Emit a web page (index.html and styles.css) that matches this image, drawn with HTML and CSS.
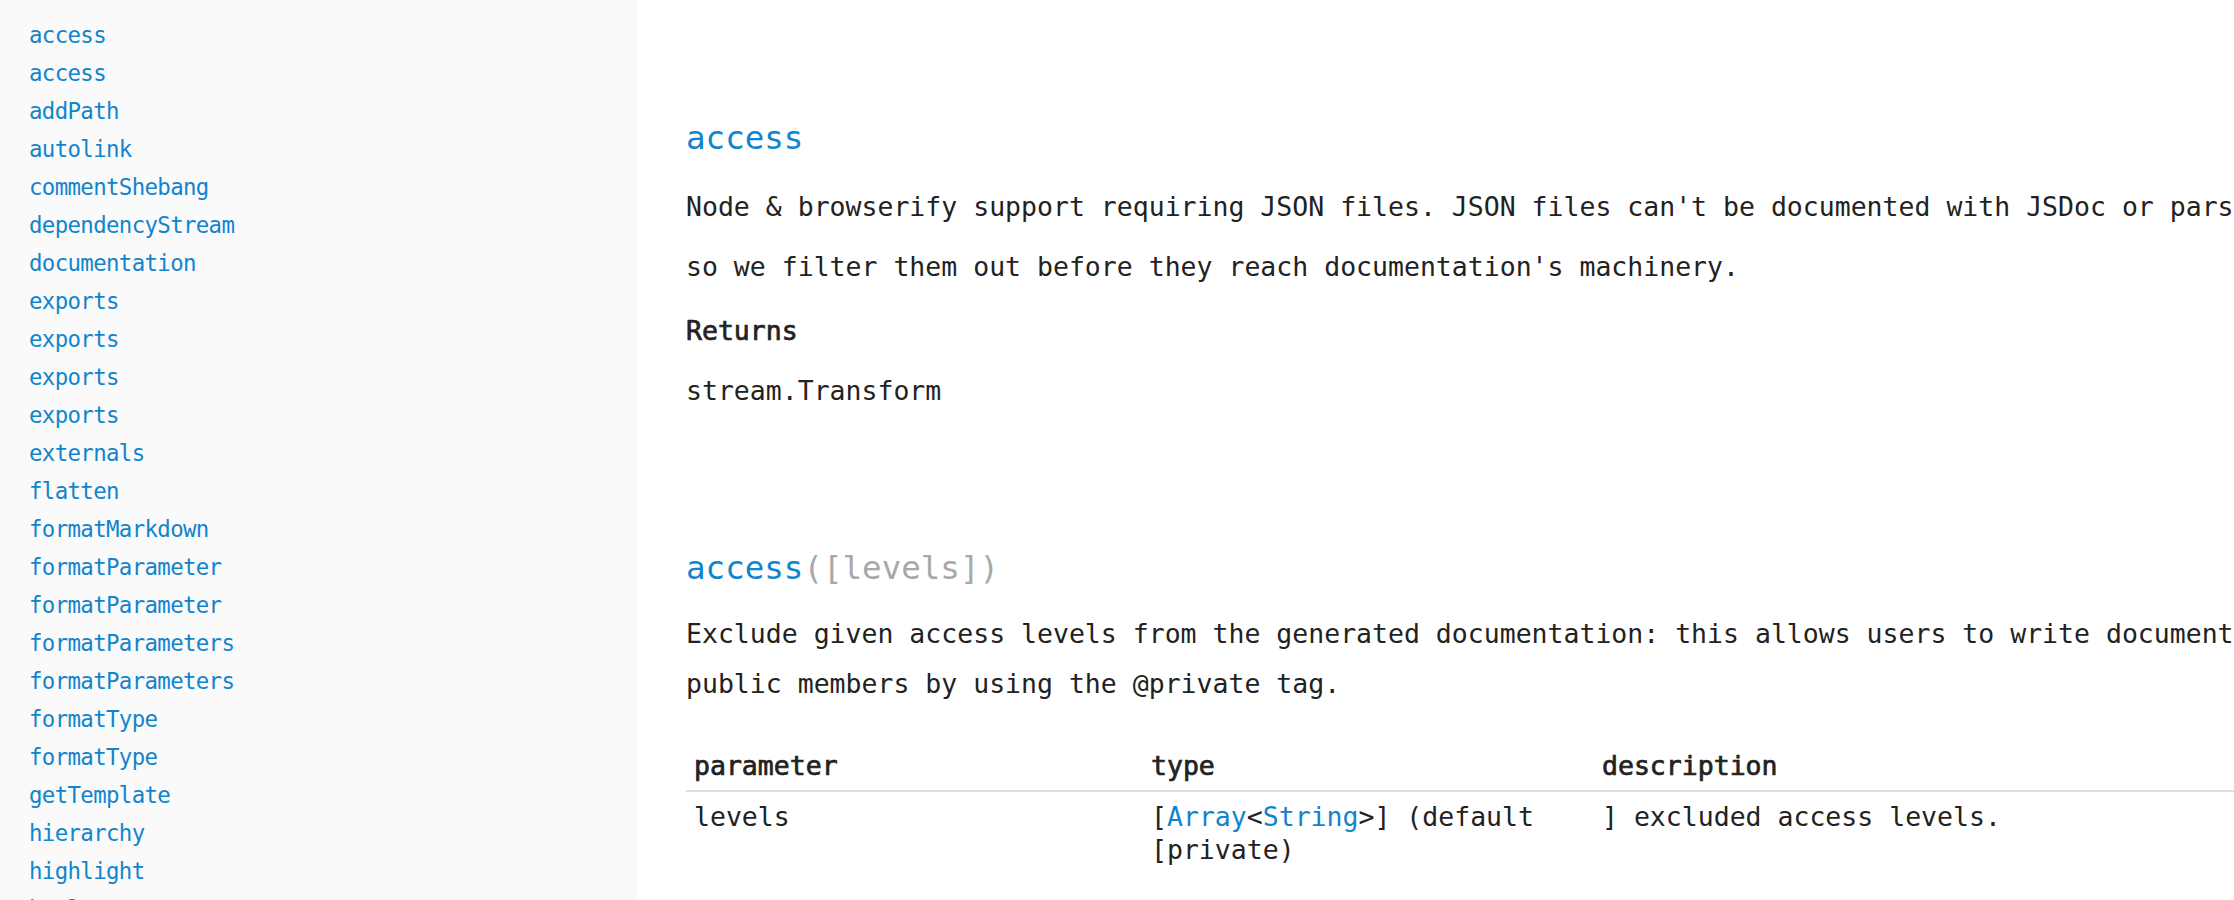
FILE: index.html
```html
<!DOCTYPE html>
<html lang="en">
<head>
<meta charset="utf-8">
<title>documentation</title>
<link rel="stylesheet" href="styles.css">
</head>
<body>
<div class="page">
  <nav class="sidebar">
    <ul class="toc">
      <li><a href="#access">access</a></li>
      <li><a href="#access-1">access</a></li>
      <li><a href="#addpath">addPath</a></li>
      <li><a href="#autolink">autolink</a></li>
      <li><a href="#commentshebang">commentShebang</a></li>
      <li><a href="#dependencystream">dependencyStream</a></li>
      <li><a href="#documentation">documentation</a></li>
      <li><a href="#exports">exports</a></li>
      <li><a href="#exports-1">exports</a></li>
      <li><a href="#exports-2">exports</a></li>
      <li><a href="#exports-3">exports</a></li>
      <li><a href="#externals">externals</a></li>
      <li><a href="#flatten">flatten</a></li>
      <li><a href="#formatmarkdown">formatMarkdown</a></li>
      <li><a href="#formatparameter">formatParameter</a></li>
      <li><a href="#formatparameter-1">formatParameter</a></li>
      <li><a href="#formatparameters">formatParameters</a></li>
      <li><a href="#formatparameters-1">formatParameters</a></li>
      <li><a href="#formattype">formatType</a></li>
      <li><a href="#formattype-1">formatType</a></li>
      <li><a href="#gettemplate">getTemplate</a></li>
      <li><a href="#hierarchy">hierarchy</a></li>
      <li><a href="#highlight">highlight</a></li>
      <li><a href="#html">html</a></li>
    </ul>
  </nav>
  <main class="content">
    <section class="entry entry-first" id="access">
      <h3 class="entry-title"><a href="#access">access</a></h3>
      <p class="text">Node &amp; browserify support requiring JSON files. JSON files can't be documented with JSDoc or parsed with espree, so we filter them out before they reach documentation's machinery.</p>
      <h4 class="label">Returns</h4>
      <div class="returns">stream.Transform</div>
    </section>
    <section class="entry entry-second" id="access-1">
      <h3 class="entry-title"><a href="#access-1">access</a><span class="gray">([levels])</span></h3>
      <p class="text">Exclude given access levels from the generated documentation: this allows users to write documentation for non-public members by using the @private tag.</p>
      <table class="params">
        <thead>
          <tr>
            <th class="col-name">parameter</th>
            <th class="col-type">type</th>
            <th class="col-desc">description</th>
          </tr>
        </thead>
        <tbody>
          <tr>
            <td class="col-name">levels</td>
            <td class="col-type">[<a href="#">Array</a>&lt;<a href="#">String</a>&gt;] (default [private)</td>
            <td class="col-desc">] excluded access levels.</td>
          </tr>
        </tbody>
      </table>
    </section>
  </main>
</div>
</body>
</html>
```

FILE: styles.css
```css
html, body {
  margin: 0;
  padding: 0;
  height: 900px;
  overflow: hidden;
  background: #ffffff;
}

body {
  font-family: "DejaVu Sans Mono", "Liberation Mono", monospace;
  color: #222222;
}

a {
  color: #1184ce;
  text-decoration: none;
}

.page {
  display: flex;
  width: 2600px;
  height: 900px;
}

.sidebar {
  flex: 0 0 637px;
  height: 900px;
  background: #fafafa;
  box-sizing: border-box;
  padding: 16px 0 0 29px;
  overflow: hidden;
}

.toc {
  list-style: none;
  margin: 0;
  padding: 0;
  font-size: 22.4px;
  letter-spacing: -0.65px;
  line-height: 38px;
}

.toc li {
  margin: 0;
  white-space: nowrap;
}

.content {
  flex: 0 0 1816px;
  padding-left: 49px;
  font-size: 26.5px;
  line-height: 60px;
}

.entry-title {
  margin: 0;
  font-size: 32.5px;
  line-height: 60px;
  font-weight: normal;
}

.gray {
  color: #a8a8a8;
}

.entry-first {
  padding-top: 108px;
}

.entry-first .text {
  margin: 9px 0 0;
}

.label {
  margin: 4px 0 0;
  font-size: 26.5px;
  line-height: 60px;
  font-weight: normal;
  -webkit-text-stroke: 0.7px #222222;
}

.returns {
  margin: 0;
}

.entry-second {
  padding-top: 117px;
}

.entry-second .text {
  margin: 11px 0 0;
  line-height: 50px;
}

.params {
  margin-top: 32px;
  width: 1816px;
  border-collapse: collapse;
  table-layout: fixed;
  font-size: 26.5px;
  line-height: 33px;
}

.params th,
.params td {
  text-align: left;
  vertical-align: top;
  padding: 8px;
}

.params th {
  font-weight: normal;
  -webkit-text-stroke: 0.7px #222222;
  border-bottom: 2px solid #dddddd;
}

.params .col-name {
  width: 441px;
}

.params .col-type {
  width: 435px;
}
```
